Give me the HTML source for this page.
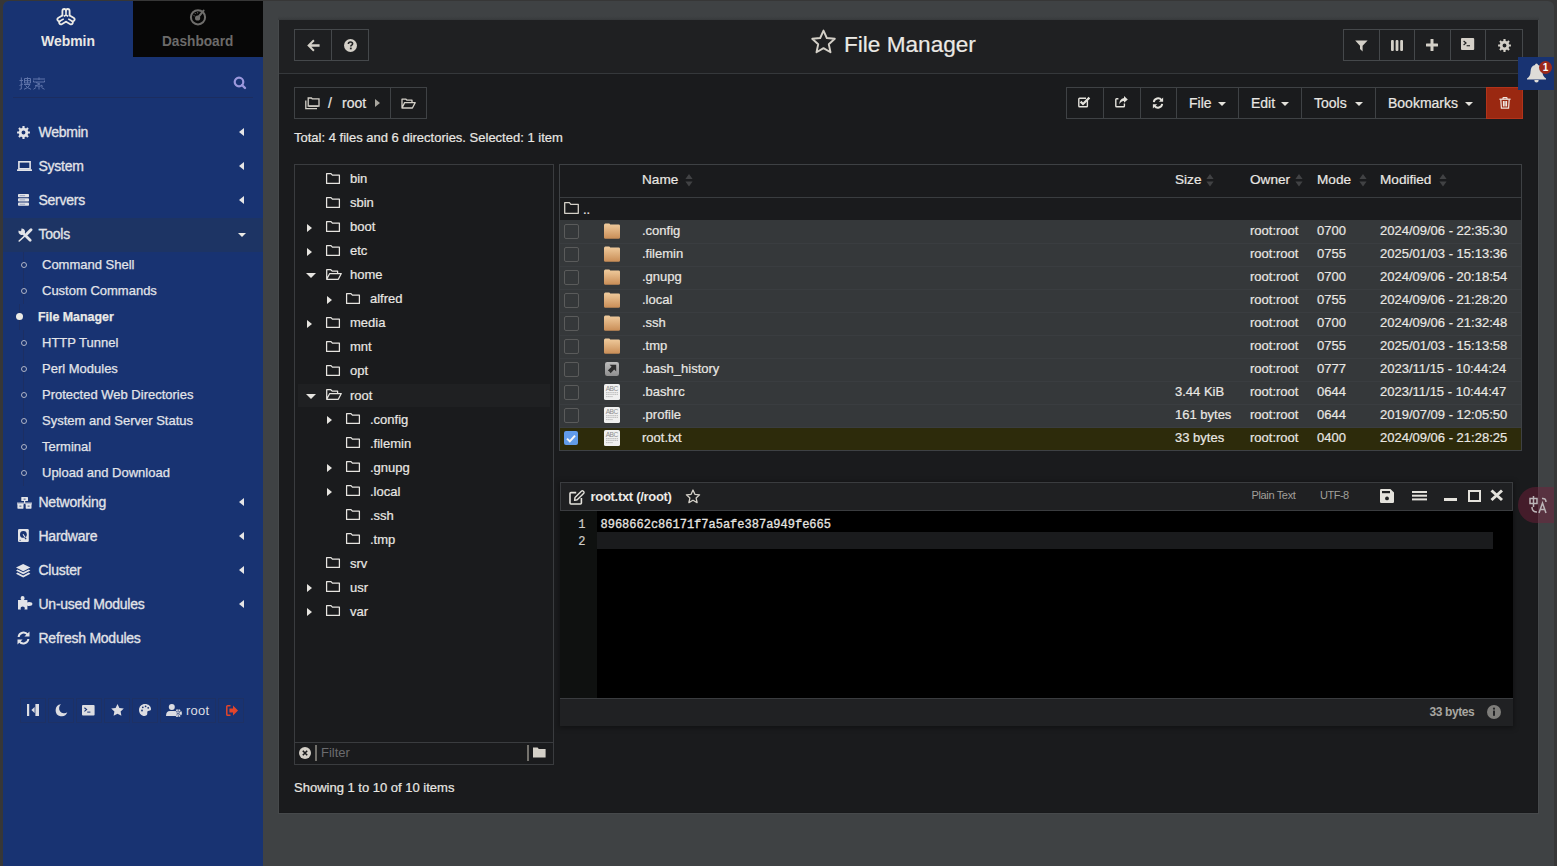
<!DOCTYPE html>
<html><head><meta charset="utf-8">
<style>
*{box-sizing:border-box;margin:0;padding:0}
html,body{width:1557px;height:866px;overflow:hidden;background:#373737;font-family:"Liberation Sans",sans-serif;position:relative}
.a{position:absolute}
.t{position:absolute;white-space:nowrap;height:20px;line-height:20px}
svg{position:absolute;display:block;overflow:visible}
#win{left:3px;top:1px;width:1551px;height:865px;border-radius:6px 6px 0 0;background:#3f4244}
#side{left:3px;top:1px;width:260px;height:865px;background:#183372;border-radius:6px 0 0 0}
.mi{color:#e3e4e8;font-size:14px;letter-spacing:-0.25px;-webkit-text-stroke:0.3px #e3e4e8}
.sm{color:#e2e4e9;font-size:13px;-webkit-text-stroke:0.25px #e2e4e9;transform:translateY(1px)}
.car{position:absolute;width:0;height:0;border-top:4px solid transparent;border-bottom:4px solid transparent;border-right:5px solid #e6e6e6;margin-left:1px}
.bb{position:absolute;top:698px;height:25px;border:1px solid #1d3165}
/* main */
#main{left:279px;top:20px;width:1259px;height:793px;background:#1a1b1d;box-shadow:inset -1px -1px 0 #18191b}
.grp{position:absolute;border:1px solid #45484b;background:#1e1f21}
.dv{position:absolute;width:1px;background:#45484b}
.pt{color:#e9e7e3;-webkit-text-stroke:0.2px #e9e7e3}
.ic{fill:#d4d0c8}
</style></head><body>
<div id="win" class="a"></div>
<div id="side" class="a"></div>
<!-- dashboard tab -->
<div class="a" style="left:133px;top:1px;width:130px;height:56px;background:#070707"></div>
<!-- webmin logo -->
<svg style="left:56px;top:7px" width="20" height="19" viewBox="-10 -10 20 19">
 <g transform="translate(0,0.6)">
 <path d="M-3.6 -2.2 V-6.6 Q-3.6 -8.6 -1.8 -8.6 Q0 -8.6 0 -6.8 Q0 -8.6 1.8 -8.6 Q3.6 -8.6 3.6 -6.6 V-2.2" fill="none" stroke="#ecebe6" stroke-width="1.8" stroke-linejoin="round" stroke-linecap="round"/>
 <path d="M-3.6 -2.2 V-6.6 Q-3.6 -8.6 -1.8 -8.6 Q0 -8.6 0 -6.8 Q0 -8.6 1.8 -8.6 Q3.6 -8.6 3.6 -6.6 V-2.2" fill="none" stroke="#ecebe6" stroke-width="1.8" stroke-linejoin="round" stroke-linecap="round" transform="rotate(120)"/>
 <path d="M-3.6 -2.2 V-6.6 Q-3.6 -8.6 -1.8 -8.6 Q0 -8.6 0 -6.8 Q0 -8.6 1.8 -8.6 Q3.6 -8.6 3.6 -6.6 V-2.2" fill="none" stroke="#ecebe6" stroke-width="1.8" stroke-linejoin="round" stroke-linecap="round" transform="rotate(240)"/>
 <path d="M0 -6.8 V-2.6 M0 -2.6 L-2.2 -1.2 M0 -2.6 L2.2 -1.2" stroke="#ecebe6" stroke-width="1.6" fill="none"/>
 <path d="M0 -6.8 V-2.6" stroke="#ecebe6" stroke-width="1.6" transform="rotate(120)"/>
 <path d="M0 -6.8 V-2.6" stroke="#ecebe6" stroke-width="1.6" transform="rotate(240)"/>
 </g>
</svg>
<div class="t" style="left:41px;top:30.8px;font-size:15px;font-weight:bold;color:#e9e8e4;transform:scaleX(0.93);transform-origin:0 0">Webmin</div>
<!-- dashboard icon -->
<svg style="left:189px;top:8px" width="18" height="18" viewBox="0 0 18 18">
 <circle cx="9" cy="9.3" r="7.1" fill="none" stroke="#6f6e6c" stroke-width="2"/>
 <path d="M9 9.5 L14.6 2.6" stroke="#6f6e6c" stroke-width="2" stroke-linecap="round"/>
 <circle cx="8.6" cy="10" r="2.6" fill="#6f6e6c"/>
 <path d="M4.6 7.5 L5.6 7.9 M6 5.2 L6.7 6 M8.6 4.3 L8.6 5.3" stroke="#6f6e6c" stroke-width="1"/>
</svg>
<div class="t" style="left:162px;top:30.8px;font-size:15px;font-weight:bold;color:#6c6b6a;transform:scaleX(0.91);transform-origin:0 0">Dashboard</div>
<!-- search -->
<svg style="left:19px;top:77px" width="27" height="13" viewBox="0 0 27 13">
 <g stroke="#5f74aa" stroke-width="1" fill="none">
  <path d="M0.5 3.5 H4 M2.3 0.5 V12 L0.6 12.3 M0.5 8.5 L4 7"/>
  <path d="M5.5 1.5 H11.5 V6 H5.5 Z M5.5 3.7 H11.5 M8.5 0.3 V6.5 M5 7.5 H11 Q9.5 11 5 12.3 M6.5 8.5 Q8 11 12 12.3"/>
  <path d="M14 2 H26 M20 0.3 V3 M14.5 3.5 V5 H25.5 V3.5 M17 5.5 L21 7 L16 9 H23 M22 8 L24 9.5 M20 9 V12.5 M17 10.5 L14.5 12.3 M22.5 10.5 L25.5 12.3"/>
 </g>
</svg>
<svg style="left:232px;top:75px" width="15" height="15" viewBox="0 0 15 15">
 <circle cx="7" cy="7" r="4.3" fill="none" stroke="#9b98dc" stroke-width="2.2"/>
 <path d="M10 10 L13 13" stroke="#9b98dc" stroke-width="2.4" stroke-linecap="round"/>
</svg>
<div class="a" style="left:13px;top:97px;width:240px;height:1px;background:#1b2d60"></div>

<!-- menu -->
<svg style="left:17.3px;top:125.5px" width="13" height="13" viewBox="0 0 14 14"><path fill="#e3e4e8" fill-rule="evenodd" d="M12.07 5.83 L13.91 5.85 L13.91 8.15 L12.07 8.17 L11.41 9.75 L12.70 11.07 L11.07 12.70 L9.75 11.41 L8.17 12.07 L8.15 13.91 L5.85 13.91 L5.83 12.07 L4.25 11.41 L2.93 12.70 L1.30 11.07 L2.59 9.75 L1.93 8.17 L0.09 8.15 L0.09 5.85 L1.93 5.83 L2.59 4.25 L1.30 2.93 L2.93 1.30 L4.25 2.59 L5.83 1.93 L5.85 0.09 L8.15 0.09 L8.17 1.93 L9.75 2.59 L11.07 1.30 L12.70 2.93 L11.41 4.25 Z M9.10 7.00 A2.1 2.1 0 1 0 4.90 7.00 A2.1 2.1 0 1 0 9.10 7.00 Z"/></svg>
<div class="t mi" style="left:38.5px;top:122px">Webmin</div>
<div class="car" style="left:238px;top:128px"></div>

<svg style="left:17px;top:161px" width="15" height="10" viewBox="0 0 15 10">
 <rect x="1.9" y="0.8" width="11.2" height="7" fill="none" stroke="#e3e4e8" stroke-width="1.6"/>
 <rect x="0" y="8.2" width="15" height="1.8" rx="0.5" fill="#e3e4e8"/>
</svg>
<div class="t mi" style="left:38.5px;top:156px">System</div>
<div class="car" style="left:238px;top:162px"></div>

<svg style="left:18.3px;top:194px" width="11" height="12" viewBox="0 0 11 12">
 <g fill="#e3e4e8"><rect x="0" y="0" width="11" height="3.3" rx="0.8"/><rect x="0" y="4.2" width="11" height="3.3" rx="0.8"/><rect x="0" y="8.5" width="11" height="3.3" rx="0.8"/></g>
 <g fill="#8a97b8"><rect x="1.6" y="1.3" width="5.5" height="0.8"/><rect x="1.6" y="5.5" width="5.5" height="0.8"/><rect x="1.6" y="9.8" width="5.5" height="0.8"/></g>
</svg>
<div class="t mi" style="left:38.5px;top:190px">Servers</div>
<div class="car" style="left:238px;top:196px"></div>

<div class="a" style="left:3px;top:218px;width:260px;height:34px;background:#1d3464"></div>
<svg style="left:17.5px;top:227.5px" width="14" height="14" viewBox="0 0 14 14">
 <path d="M5 5 L12.2 12.2" stroke="#e3e4e8" stroke-width="2.8" stroke-linecap="round"/>
 <path d="M0.6 2.6 A3.3 3.3 0 1 0 3.4 0.4 L3.4 2.2 L2.4 3.2 Z" fill="#e3e4e8"/>
 <path d="M13 1.8 L9 5.8" stroke="#e3e4e8" stroke-width="3" stroke-linecap="round"/>
 <path d="M9 5.8 L1.2 13" stroke="#e3e4e8" stroke-width="1.6" stroke-linecap="round"/>
</svg>
<div class="t mi" style="left:38.5px;top:224px">Tools</div>
<div class="a" style="left:238px;top:233px;width:0;height:0;border-left:4px solid transparent;border-right:4px solid transparent;border-top:4px solid #ecebe6"></div>

<!-- submenu line -->
<div class="a" style="left:23px;top:252px;width:1px;height:52px;background:#1c2f63"></div>
<div class="a" style="left:19px;top:304px;width:1px;height:26px;background:#1c2f63"></div>
<div class="a" style="left:23px;top:330px;width:1px;height:156px;background:#1c2f63"></div>
<div class="a" style="left:20.5px;top:262px;width:6px;height:6px;border:1px solid #aeb4c6;border-radius:50%"></div>
<div class="t sm" style="left:42px;top:254px">Command Shell</div>
<div class="a" style="left:20.5px;top:288px;width:6px;height:6px;border:1px solid #aeb4c6;border-radius:50%"></div>
<div class="t sm" style="left:42px;top:280px">Custom Commands</div>
<div class="a" style="left:16px;top:313px;width:7px;height:7px;background:#ecebe6;border-radius:50%"></div>
<div class="t sm" style="left:38px;top:306px;font-weight:bold;font-size:12.4px;color:#ecebe6">File Manager</div>
<div class="a" style="left:20.5px;top:340px;width:6px;height:6px;border:1px solid #aeb4c6;border-radius:50%"></div>
<div class="t sm" style="left:42px;top:332px">HTTP Tunnel</div>
<div class="a" style="left:20.5px;top:366px;width:6px;height:6px;border:1px solid #aeb4c6;border-radius:50%"></div>
<div class="t sm" style="left:42px;top:358px">Perl Modules</div>
<div class="a" style="left:20.5px;top:392px;width:6px;height:6px;border:1px solid #aeb4c6;border-radius:50%"></div>
<div class="t sm" style="left:42px;top:384px">Protected Web Directories</div>
<div class="a" style="left:20.5px;top:418px;width:6px;height:6px;border:1px solid #aeb4c6;border-radius:50%"></div>
<div class="t sm" style="left:42px;top:410px">System and Server Status</div>
<div class="a" style="left:20.5px;top:444px;width:6px;height:6px;border:1px solid #aeb4c6;border-radius:50%"></div>
<div class="t sm" style="left:42px;top:436px">Terminal</div>
<div class="a" style="left:20.5px;top:470px;width:6px;height:6px;border:1px solid #aeb4c6;border-radius:50%"></div>
<div class="t sm" style="left:42px;top:462px">Upload and Download</div>

<!-- lower menu -->
<svg style="left:16.6px;top:497px" width="15" height="12" viewBox="0 0 15 12">
 <g fill="#e3e4e8"><rect x="4.3" y="0" width="6.7" height="4.1" rx="0.6"/><rect x="0.4" y="6.7" width="6.1" height="5" rx="0.6"/><rect x="8.7" y="6.7" width="5.8" height="5" rx="0.6"/><rect x="0" y="5.6" width="15" height="1.1"/><rect x="7" y="4" width="1.2" height="2"/></g>
 <g fill="#183372"><rect x="6.6" y="1.7" width="2" height="0.8"/><rect x="2.4" y="8.7" width="2" height="0.8"/><rect x="10.6" y="8.7" width="2" height="0.8"/></g>
</svg>
<div class="t mi" style="left:38.5px;top:492px">Networking</div>
<div class="car" style="left:238px;top:498px"></div>

<svg style="left:18.3px;top:529px" width="11" height="13" viewBox="0 0 11 13">
 <rect x="0" y="0" width="10.8" height="13" rx="1.3" fill="#e3e4e8"/>
 <circle cx="5.4" cy="5.4" r="3.4" fill="#183372"/>
 <path d="M5 5.2 L7.6 9" stroke="#e3e4e8" stroke-width="1.1"/>
 <path d="M6.8 8.6 L8.2 10.2" stroke="#183372" stroke-width="1.2"/>
 <rect x="1.6" y="10.8" width="1" height="1" fill="#183372"/>
</svg>
<div class="t mi" style="left:38.5px;top:526px">Hardware</div>
<div class="car" style="left:238px;top:532px"></div>

<svg style="left:16.4px;top:563.8px" width="15" height="14" viewBox="0 0 15 14">
 <g fill="#e3e4e8"><path d="M7.2 0 L14.4 3.6 L7.2 7.2 L0 3.6 Z"/><path d="M1.6 5.4 L7.2 8.2 L12.8 5.4 L14.4 6.6 L7.2 10.2 L0 6.6 Z"/><path d="M1.6 8.6 L7.2 11.4 L12.8 8.6 L14.4 9.8 L7.2 13.4 L0 9.8 Z"/></g>
</svg>
<div class="t mi" style="left:38.5px;top:560px">Cluster</div>
<div class="car" style="left:238px;top:566px"></div>

<svg style="left:18px;top:596px" width="15" height="14" viewBox="0 0 15 14">
 <path fill="#e3e4e8" d="M0 4 H3.4 Q2.6 3.2 2.6 2.2 Q2.6 0 4.6 0 Q6.6 0 6.6 2.2 Q6.6 3.2 5.8 4 H9.4 V6.6 Q10 6.1 11 6.1 Q14.4 6.2 14.4 8 Q14.4 9.9 11 9.9 Q10 9.9 9.4 9.4 V13.4 H6.4 Q6.8 12.8 6.8 12 Q6.8 10.5 4.7 10.5 Q2.6 10.5 2.6 12 Q2.6 12.8 3 13.4 H0 Z"/>
</svg>
<div class="t mi" style="left:38.5px;top:594px">Un-used Modules</div>
<div class="car" style="left:238px;top:600px"></div>

<svg style="left:17px;top:631px" width="13" height="14" viewBox="0 0 13 14">
 <g fill="none" stroke="#e3e4e8" stroke-width="2"><path d="M1.6 6 A5 5 0 0 1 10.6 3.6"/><path d="M11.4 8 A5 5 0 0 1 2.4 10.4"/></g>
 <path d="M12.5 0.5 V5.6 H7.4 Z" fill="#e3e4e8"/><path d="M0.5 13.5 V8.4 H5.6 Z" fill="#e3e4e8"/>
</svg>
<div class="t mi" style="left:38.5px;top:628px">Refresh Modules</div>

<!-- bottom buttons -->
<div class="bb" style="left:20px;width:26px"></div>
<div class="bb" style="left:48px;width:26px"></div>
<div class="bb" style="left:76px;width:26px"></div>
<div class="bb" style="left:104px;width:26px"></div>
<div class="bb" style="left:132px;width:26px"></div>
<div class="bb" style="left:160px;width:56px"></div>
<div class="bb" style="left:218px;width:26px"></div>
<svg style="left:27px;top:704px" width="12" height="12" viewBox="0 0 12 12">
 <g fill="#dcdde2"><rect x="0" y="0" width="2.2" height="12"/><rect x="8.4" y="0" width="3.6" height="12"/><path d="M7.6 3 V9 L4.4 6 Z"/></g>
</svg>
<svg style="left:55px;top:704px" width="13" height="12" viewBox="0 0 13 12">
 <path fill="#dcdde2" d="M6 0.3 A6 6 0 1 0 12.3 8.2 A5 5 0 0 1 6 0.3 Z"/>
</svg>
<svg style="left:82px;top:705px" width="13" height="11" viewBox="0 0 13 11">
 <rect x="0" y="0" width="12.6" height="10.4" rx="1" fill="#dcdde2"/>
 <path d="M2.4 2.8 L4.6 4.6 L2.4 6.4" stroke="#183372" stroke-width="1.1" fill="none"/><rect x="5.2" y="6.6" width="3.2" height="1" fill="#183372"/>
</svg>
<svg style="left:111px;top:704px" width="13" height="12" viewBox="0 0 13 12">
 <path fill="#dcdde2" d="M6.5 0 L8.4 3.9 L12.8 4.4 L9.6 7.4 L10.4 11.8 L6.5 9.7 L2.6 11.8 L3.4 7.4 L0.2 4.4 L4.6 3.9 Z"/>
</svg>
<svg style="left:139px;top:704px" width="12" height="12" viewBox="0 0 12 12">
 <path fill="#dcdde2" d="M6 0 C9.5 0 12 2.3 12 5 C12 7 10 6.6 9 7 C7.8 7.6 8.6 9 8.2 10.3 C7.9 11.6 6.6 12 5.6 12 C2.5 12 0 9.4 0 6 C0 2.6 2.6 0 6 0 Z"/>
 <g fill="#183372"><circle cx="3" cy="6.5" r="0.9"/><circle cx="3.8" cy="3.3" r="0.9"/><circle cx="6.6" cy="2.3" r="0.9"/><circle cx="9.2" cy="3.8" r="0.9"/></g>
</svg>
<svg style="left:166px;top:704px" width="16" height="13" viewBox="0 0 16 13">
 <circle cx="5.8" cy="3" r="3" fill="#dcdde2"/>
 <path fill="#dcdde2" d="M0 12 Q0 7 4 7 H8 Q9.5 7 10.5 8 V12 Z"/>
 <circle cx="12" cy="9.2" r="2.9" fill="none" stroke="#dcdde2" stroke-width="2" stroke-dasharray="1.6 0.7"/>
 <circle cx="12" cy="9.2" r="1.6" fill="#dcdde2"/><circle cx="12" cy="9.2" r="0.8" fill="#183372"/>
</svg>
<div class="t" style="left:186px;top:701px;font-size:13px;letter-spacing:0.2px;color:#dcdde2">root</div>
<svg style="left:226px;top:705px" width="12" height="11" viewBox="0 0 12 11">
 <path d="M4.5 0.8 H1.6 Q0.8 0.8 0.8 1.6 V9.4 Q0.8 10.2 1.6 10.2 H4.5" fill="none" stroke="#e2452b" stroke-width="1.5"/>
 <path fill="#e2452b" d="M3.4 3.6 H7 V0.6 L12 5.5 L7 10.4 V7.4 H3.4 Z"/>
</svg>


<!-- MAIN -->
<div class="a" style="left:278px;top:16px;width:1261px;height:4px;background:linear-gradient(#3f4244,#3b3e40 60%,#37393b)"></div>
<div class="a" style="left:278px;top:20px;width:1261px;height:794px;background:#46494b"></div>
<div id="main" class="a"></div>
<div class="a" style="left:279px;top:20px;width:1259px;height:53px;background:#1f2022"></div>
<div class="a" style="left:279px;top:73px;width:1259px;height:1px;background:#35383b"></div>
<!-- back/help -->
<div class="grp" style="left:294px;top:29px;width:75px;height:32px"></div>
<div class="dv" style="left:331px;top:29px;height:32px"></div>
<svg style="left:307px;top:39px" width="13" height="13" viewBox="0 0 13 13">
 <path class="ic" d="M6.2 0.6 L7.6 2 L4.4 5.2 H12.6 V7.8 H4.4 L7.6 11 L6.2 12.4 L0.2 6.5 Z"/>
</svg>
<svg style="left:343.5px;top:38.5px" width="13" height="13" viewBox="0 0 13 13">
 <circle cx="6.5" cy="6.5" r="6.5" class="ic"/>
 <path d="M4.4 5 Q4.4 3 6.5 3 Q8.6 3 8.6 4.8 Q8.6 5.8 7.4 6.4 Q6.8 6.8 6.8 7.6" fill="none" stroke="#1f2022" stroke-width="1.6"/>
 <rect x="5.9" y="8.6" width="1.8" height="1.7" fill="#1f2022"/>
</svg>
<!-- title -->
<svg style="left:810px;top:29px" width="27" height="26" viewBox="0 0 27 26">
 <path d="M13.5 1.6 L16.8 9 L24.8 9.8 L18.8 15.2 L20.5 23.2 L13.5 19.1 L6.5 23.2 L8.2 15.2 L2.2 9.8 L10.2 9 Z" fill="none" stroke="#d4d0c8" stroke-width="1.9" stroke-linejoin="round"/>
</svg>
<div class="t pt" style="left:844px;top:31px;height:28px;line-height:28px;font-size:22.6px;color:#eceae6">File Manager</div>
<!-- right tools -->
<div class="grp" style="left:1343px;top:29px;width:180px;height:32px"></div>
<div class="dv" style="left:1379px;top:29px;height:32px"></div>
<div class="dv" style="left:1414px;top:29px;height:32px"></div>
<div class="dv" style="left:1450px;top:29px;height:32px"></div>
<div class="dv" style="left:1485px;top:29px;height:32px"></div>
<svg style="left:1355px;top:39.5px" width="13" height="12" viewBox="0 0 13 12">
 <path class="ic" d="M0.2 0.6 H12.6 L7.6 5.8 V11.6 L5 9 V5.8 Z"/>
</svg>
<svg style="left:1391px;top:39.5px" width="12" height="11" viewBox="0 0 12 11">
 <g class="ic"><rect x="0" y="0" width="2.8" height="11" rx="1"/><rect x="4.6" y="0" width="2.8" height="11" rx="1"/><rect x="9.2" y="0" width="2.8" height="11" rx="1"/></g>
</svg>
<svg style="left:1426px;top:38.5px" width="12" height="12" viewBox="0 0 12 12">
 <g class="ic"><rect x="4.5" y="0" width="3" height="12" rx="0.5"/><rect x="0" y="4.5" width="12" height="3" rx="0.5"/></g>
</svg>
<svg style="left:1461px;top:38px" width="14" height="12" viewBox="0 0 14 12">
 <rect x="0" y="0" width="13.2" height="12" rx="1" class="ic"/>
 <path d="M2.6 3 L5 5 L2.6 7" stroke="#1f2022" stroke-width="1.2" fill="none"/><rect x="5.6" y="7.2" width="3.4" height="1.1" fill="#1f2022"/>
</svg>
<svg style="left:1497.5px;top:38.5px" width="13" height="13" viewBox="0 0 14 14"><path class="ic" fill-rule="evenodd" d="M12.07 5.83 L13.91 5.85 L13.91 8.15 L12.07 8.17 L11.41 9.75 L12.70 11.07 L11.07 12.70 L9.75 11.41 L8.17 12.07 L8.15 13.91 L5.85 13.91 L5.83 12.07 L4.25 11.41 L2.93 12.70 L1.30 11.07 L2.59 9.75 L1.93 8.17 L0.09 8.15 L0.09 5.85 L1.93 5.83 L2.59 4.25 L1.30 2.93 L2.93 1.30 L4.25 2.59 L5.83 1.93 L5.85 0.09 L8.15 0.09 L8.17 1.93 L9.75 2.59 L11.07 1.30 L12.70 2.93 L11.41 4.25 Z M9.10 7.00 A2.1 2.1 0 1 0 4.90 7.00 A2.1 2.1 0 1 0 9.10 7.00 Z"/></svg>

<!-- breadcrumb -->
<div class="grp" style="left:294px;top:87px;width:97px;height:32px;background:#1a1b1d;border-color:#3f4245"></div>
<div class="grp" style="left:390px;top:87px;width:37px;height:32px;background:#1a1b1d;border-color:#3f4245"></div>
<svg style="left:304.5px;top:97px" width="15" height="13" viewBox="0 0 15 13">
 <g fill="none" stroke="#d4d0c8" stroke-width="1.3">
  <path d="M3.2 2.6 V1 H6.4 L7.2 1.8 H14 V9.2 H3.2 Z"/>
  <path d="M0.8 3.4 V11.6 H12"/>
 </g>
 <rect x="3.8" y="8.4" width="9.6" height="1.4" fill="#d4d0c8"/>
</svg>
<div class="t pt" style="left:328px;top:93px;font-size:14px">/</div>
<div class="t pt" style="left:342px;top:93px;font-size:14px">root</div>
<div class="a" style="left:375px;top:99px;width:0;height:0;border-top:4px solid transparent;border-bottom:4px solid transparent;border-left:5px solid #a9a69f"></div>
<svg style="left:401px;top:98px" width="15" height="11" viewBox="0 0 15 11">
 <path d="M1 10 V1.2 H5 L6 2.2 H11 V4.4 M1 10 L3.6 4.6 H14.2 L11.4 10 Z" fill="none" stroke="#d4d0c8" stroke-width="1.3" stroke-linejoin="round"/>
</svg>
<div class="t pt" style="left:294px;top:128px;font-size:13px">Total: 4 files and 6 directories. Selected: 1 item</div>

<!-- action row -->
<div class="grp" style="left:1066px;top:87px;width:421px;height:32px;background:#1a1b1d;border-color:#3f4245"></div>
<div class="dv" style="left:1103px;top:87px;height:32px;background:#3f4245"></div>
<div class="dv" style="left:1140px;top:87px;height:32px;background:#3f4245"></div>
<div class="dv" style="left:1176px;top:87px;height:32px;background:#3f4245"></div>
<div class="dv" style="left:1238px;top:87px;height:32px;background:#3f4245"></div>
<div class="dv" style="left:1301px;top:87px;height:32px;background:#3f4245"></div>
<div class="dv" style="left:1375px;top:87px;height:32px;background:#3f4245"></div>
<div class="a" style="left:1486px;top:87px;width:37px;height:32px;background:#9a2811;border:1px solid #b3331a"></div>
<svg style="left:1078px;top:96px" width="13" height="12" viewBox="0 0 13 12">
 <path d="M9.4 4.6 V10 Q9.4 10.8 8.6 10.8 H1.6 Q0.8 10.8 0.8 10 V3 Q0.8 2.2 1.6 2.2 H8" fill="none" stroke="#e4e2dc" stroke-width="1.4"/>
 <path d="M2.6 5.6 L5 8 L11.4 1.6" fill="none" stroke="#e4e2dc" stroke-width="2.2"/>
</svg>
<svg style="left:1115px;top:95.5px" width="13" height="12" viewBox="0 0 13 12">
 <path d="M9.4 7.6 V10 Q9.4 10.8 8.6 10.8 H1.6 Q0.8 10.8 0.8 10 V3.6 Q0.8 2.8 1.6 2.8 H3.4" fill="none" stroke="#e4e2dc" stroke-width="1.4"/>
 <path fill="#e4e2dc" d="M9 0 L12.8 3.4 L9 6.8 V5 Q5.6 5 4.4 8.6 Q4 3 9 2 Z"/>
</svg>
<svg style="left:1152px;top:96.5px" width="12" height="12" viewBox="0 0 13 14">
 <g fill="none" stroke="#e4e2dc" stroke-width="2.2"><path d="M1.6 6 A5 5 0 0 1 10.6 3.6"/><path d="M11.4 8 A5 5 0 0 1 2.4 10.4"/></g>
 <path d="M12.5 0.5 V5.6 H7.4 Z" fill="#e4e2dc"/><path d="M0.5 13.5 V8.4 H5.6 Z" fill="#e4e2dc"/>
</svg>
<div class="t pt" style="left:1189px;top:93px;font-size:14px">File</div>
<div class="a" style="left:1218px;top:102px;width:0;height:0;border-left:4px solid transparent;border-right:4px solid transparent;border-top:4px solid #e4e2dc"></div>
<div class="t pt" style="left:1251px;top:93px;font-size:14px">Edit</div>
<div class="a" style="left:1281px;top:102px;width:0;height:0;border-left:4px solid transparent;border-right:4px solid transparent;border-top:4px solid #e4e2dc"></div>
<div class="t pt" style="left:1314px;top:93px;font-size:14px">Tools</div>
<div class="a" style="left:1355px;top:102px;width:0;height:0;border-left:4px solid transparent;border-right:4px solid transparent;border-top:4px solid #e4e2dc"></div>
<div class="t pt" style="left:1388px;top:93px;font-size:14px">Bookmarks</div>
<div class="a" style="left:1465px;top:102px;width:0;height:0;border-left:4px solid transparent;border-right:4px solid transparent;border-top:4px solid #e4e2dc"></div>
<svg style="left:1498.5px;top:97px" width="12" height="12" viewBox="0 0 12 12">
 <g fill="none" stroke="#f0e6e0" stroke-width="1.2"><path d="M0.4 2.2 H11.6"/><path d="M4 2.2 V1.2 Q4 0.6 4.6 0.6 H7.4 Q8 0.6 8 1.2 V2.2"/><path d="M1.8 2.4 L2.4 11.2 H9.6 L10.2 2.4"/><path d="M4.5 4 V9.6 M6 4 V9.6 M7.5 4 V9.6"/></g>
</svg>
<!-- bell -->
<div class="a" style="left:1518px;top:57px;width:36px;height:33px;background:#183372"></div>
<svg style="left:1527px;top:63px" width="20" height="20" viewBox="0 0 20 20">
 <path fill="#dedcd8" d="M9.5 0.5 Q11 0.5 11 2 Q15.5 3 15.5 9 Q15.5 13 19 15.6 V16.4 H0 V15.6 Q3.5 13 3.5 9 Q3.5 3 8 2 Q8 0.5 9.5 0.5 Z M7.3 17 H11.7 Q11.7 19.5 9.5 19.5 Q7.3 19.5 7.3 17 Z"/>
</svg>
<div class="a" style="left:1539px;top:61px;width:13px;height:13px;border-radius:50%;background:#9c2a1c;color:#fff;font-size:10px;font-weight:bold;line-height:13px;text-align:center">1</div>

<!-- TREE -->
<div class="a" style="left:294px;top:164px;width:260px;height:601px;border:1px solid #3a3c3f;background:#1a1b1d"></div>
<div class="a" style="left:298px;top:384px;width:252px;height:23px;background:#1f2022"></div>
<svg style="left:326px;top:172.5px" width="14" height="11" viewBox="0 0 14 11"><path d="M0.6 10.4 V0.6 H5 L6.4 2.2 H13.4 V10.4 Z" fill="none" stroke="#e6e4e0" stroke-width="1.25" stroke-linejoin="round"/></svg>
<div class="t pt" style="left:350px;top:169.0px;font-size:13px">bin</div>
<svg style="left:326px;top:196.6px" width="14" height="11" viewBox="0 0 14 11"><path d="M0.6 10.4 V0.6 H5 L6.4 2.2 H13.4 V10.4 Z" fill="none" stroke="#e6e4e0" stroke-width="1.25" stroke-linejoin="round"/></svg>
<div class="t pt" style="left:350px;top:193.1px;font-size:13px">sbin</div>
<div class="a" style="left:307px;top:223.6px;width:0;height:0;border-top:4px solid transparent;border-bottom:4px solid transparent;border-left:5px solid #e6e4e0"></div>
<svg style="left:326px;top:220.6px" width="14" height="11" viewBox="0 0 14 11"><path d="M0.6 10.4 V0.6 H5 L6.4 2.2 H13.4 V10.4 Z" fill="none" stroke="#e6e4e0" stroke-width="1.25" stroke-linejoin="round"/></svg>
<div class="t pt" style="left:350px;top:217.1px;font-size:13px">boot</div>
<div class="a" style="left:307px;top:247.7px;width:0;height:0;border-top:4px solid transparent;border-bottom:4px solid transparent;border-left:5px solid #e6e4e0"></div>
<svg style="left:326px;top:244.7px" width="14" height="11" viewBox="0 0 14 11"><path d="M0.6 10.4 V0.6 H5 L6.4 2.2 H13.4 V10.4 Z" fill="none" stroke="#e6e4e0" stroke-width="1.25" stroke-linejoin="round"/></svg>
<div class="t pt" style="left:350px;top:241.2px;font-size:13px">etc</div>
<div class="a" style="left:306px;top:273.2px;width:0;height:0;border-left:5px solid transparent;border-right:5px solid transparent;border-top:5px solid #e6e4e0"></div>
<svg style="left:326px;top:268.7px" width="16" height="11" viewBox="0 0 16 11"><path d="M0.7 10.3 V0.7 H4.8 L6.2 2.1 H11.6 V4.4 M0.7 10.3 L3.7 4.5 H15.3 L12.3 10.3 Z" fill="none" stroke="#e6e4e0" stroke-width="1.25" stroke-linejoin="round"/></svg>
<div class="t pt" style="left:350px;top:265.2px;font-size:13px">home</div>
<div class="a" style="left:327px;top:295.8px;width:0;height:0;border-top:4px solid transparent;border-bottom:4px solid transparent;border-left:5px solid #e6e4e0"></div>
<svg style="left:346px;top:292.8px" width="14" height="11" viewBox="0 0 14 11"><path d="M0.6 10.4 V0.6 H5 L6.4 2.2 H13.4 V10.4 Z" fill="none" stroke="#e6e4e0" stroke-width="1.25" stroke-linejoin="round"/></svg>
<div class="t pt" style="left:370px;top:289.3px;font-size:13px">alfred</div>
<div class="a" style="left:307px;top:319.8px;width:0;height:0;border-top:4px solid transparent;border-bottom:4px solid transparent;border-left:5px solid #e6e4e0"></div>
<svg style="left:326px;top:316.8px" width="14" height="11" viewBox="0 0 14 11"><path d="M0.6 10.4 V0.6 H5 L6.4 2.2 H13.4 V10.4 Z" fill="none" stroke="#e6e4e0" stroke-width="1.25" stroke-linejoin="round"/></svg>
<div class="t pt" style="left:350px;top:313.3px;font-size:13px">media</div>
<svg style="left:326px;top:340.9px" width="14" height="11" viewBox="0 0 14 11"><path d="M0.6 10.4 V0.6 H5 L6.4 2.2 H13.4 V10.4 Z" fill="none" stroke="#e6e4e0" stroke-width="1.25" stroke-linejoin="round"/></svg>
<div class="t pt" style="left:350px;top:337.4px;font-size:13px">mnt</div>
<svg style="left:326px;top:364.9px" width="14" height="11" viewBox="0 0 14 11"><path d="M0.6 10.4 V0.6 H5 L6.4 2.2 H13.4 V10.4 Z" fill="none" stroke="#e6e4e0" stroke-width="1.25" stroke-linejoin="round"/></svg>
<div class="t pt" style="left:350px;top:361.4px;font-size:13px">opt</div>
<div class="a" style="left:306px;top:393.5px;width:0;height:0;border-left:5px solid transparent;border-right:5px solid transparent;border-top:5px solid #e6e4e0"></div>
<svg style="left:326px;top:389.0px" width="16" height="11" viewBox="0 0 16 11"><path d="M0.7 10.3 V0.7 H4.8 L6.2 2.1 H11.6 V4.4 M0.7 10.3 L3.7 4.5 H15.3 L12.3 10.3 Z" fill="none" stroke="#e6e4e0" stroke-width="1.25" stroke-linejoin="round"/></svg>
<div class="t pt" style="left:350px;top:385.5px;font-size:13px">root</div>
<div class="a" style="left:327px;top:416.0px;width:0;height:0;border-top:4px solid transparent;border-bottom:4px solid transparent;border-left:5px solid #e6e4e0"></div>
<svg style="left:346px;top:413.0px" width="14" height="11" viewBox="0 0 14 11"><path d="M0.6 10.4 V0.6 H5 L6.4 2.2 H13.4 V10.4 Z" fill="none" stroke="#e6e4e0" stroke-width="1.25" stroke-linejoin="round"/></svg>
<div class="t pt" style="left:370px;top:409.5px;font-size:13px">.config</div>
<svg style="left:346px;top:437.1px" width="14" height="11" viewBox="0 0 14 11"><path d="M0.6 10.4 V0.6 H5 L6.4 2.2 H13.4 V10.4 Z" fill="none" stroke="#e6e4e0" stroke-width="1.25" stroke-linejoin="round"/></svg>
<div class="t pt" style="left:370px;top:433.6px;font-size:13px">.filemin</div>
<div class="a" style="left:327px;top:464.1px;width:0;height:0;border-top:4px solid transparent;border-bottom:4px solid transparent;border-left:5px solid #e6e4e0"></div>
<svg style="left:346px;top:461.1px" width="14" height="11" viewBox="0 0 14 11"><path d="M0.6 10.4 V0.6 H5 L6.4 2.2 H13.4 V10.4 Z" fill="none" stroke="#e6e4e0" stroke-width="1.25" stroke-linejoin="round"/></svg>
<div class="t pt" style="left:370px;top:457.6px;font-size:13px">.gnupg</div>
<div class="a" style="left:327px;top:488.2px;width:0;height:0;border-top:4px solid transparent;border-bottom:4px solid transparent;border-left:5px solid #e6e4e0"></div>
<svg style="left:346px;top:485.2px" width="14" height="11" viewBox="0 0 14 11"><path d="M0.6 10.4 V0.6 H5 L6.4 2.2 H13.4 V10.4 Z" fill="none" stroke="#e6e4e0" stroke-width="1.25" stroke-linejoin="round"/></svg>
<div class="t pt" style="left:370px;top:481.7px;font-size:13px">.local</div>
<svg style="left:346px;top:509.2px" width="14" height="11" viewBox="0 0 14 11"><path d="M0.6 10.4 V0.6 H5 L6.4 2.2 H13.4 V10.4 Z" fill="none" stroke="#e6e4e0" stroke-width="1.25" stroke-linejoin="round"/></svg>
<div class="t pt" style="left:370px;top:505.7px;font-size:13px">.ssh</div>
<svg style="left:346px;top:533.2px" width="14" height="11" viewBox="0 0 14 11"><path d="M0.6 10.4 V0.6 H5 L6.4 2.2 H13.4 V10.4 Z" fill="none" stroke="#e6e4e0" stroke-width="1.25" stroke-linejoin="round"/></svg>
<div class="t pt" style="left:370px;top:529.7px;font-size:13px">.tmp</div>
<svg style="left:326px;top:557.3px" width="14" height="11" viewBox="0 0 14 11"><path d="M0.6 10.4 V0.6 H5 L6.4 2.2 H13.4 V10.4 Z" fill="none" stroke="#e6e4e0" stroke-width="1.25" stroke-linejoin="round"/></svg>
<div class="t pt" style="left:350px;top:553.8px;font-size:13px">srv</div>
<div class="a" style="left:307px;top:584.4px;width:0;height:0;border-top:4px solid transparent;border-bottom:4px solid transparent;border-left:5px solid #e6e4e0"></div>
<svg style="left:326px;top:581.4px" width="14" height="11" viewBox="0 0 14 11"><path d="M0.6 10.4 V0.6 H5 L6.4 2.2 H13.4 V10.4 Z" fill="none" stroke="#e6e4e0" stroke-width="1.25" stroke-linejoin="round"/></svg>
<div class="t pt" style="left:350px;top:577.9px;font-size:13px">usr</div>
<div class="a" style="left:307px;top:608.4px;width:0;height:0;border-top:4px solid transparent;border-bottom:4px solid transparent;border-left:5px solid #e6e4e0"></div>
<svg style="left:326px;top:605.4px" width="14" height="11" viewBox="0 0 14 11"><path d="M0.6 10.4 V0.6 H5 L6.4 2.2 H13.4 V10.4 Z" fill="none" stroke="#e6e4e0" stroke-width="1.25" stroke-linejoin="round"/></svg>
<div class="t pt" style="left:350px;top:601.9px;font-size:13px">var</div>
<div class="a" style="left:294px;top:742px;width:260px;height:1px;background:#3a3c3f"></div>
<svg style="left:299px;top:746.5px" width="12" height="12" viewBox="0 0 12 12"><circle cx="6" cy="6" r="6" fill="#d4d0c8"/><path d="M3.8 3.8 L8.2 8.2 M8.2 3.8 L3.8 8.2" stroke="#1b1c1e" stroke-width="1.6"/></svg>
<div class="a" style="left:315px;top:745px;width:2px;height:16px;background:#74726d"></div>
<div class="t" style="left:321px;top:743px;font-size:13px;color:#6b6c6e">Filter</div>
<div class="a" style="left:527px;top:745px;width:2px;height:16px;background:#74726d"></div>
<svg style="left:533px;top:747px" width="13" height="11" viewBox="0 0 13 11"><path d="M0 10.5 V0.5 H4.6 L5.8 2 H12.6 V10.5 Z" fill="#d4d0c8"/></svg>
<div class="t pt" style="left:294px;top:777.7px;font-size:13px">Showing 1 to 10 of 10 items</div>


<!-- TABLE -->
<div class="a" style="left:559px;top:164px;width:963px;height:287px;border:1px solid #3e4144;background:#1a1b1d"></div>
<div class="a" style="left:560px;top:197px;width:961px;height:1px;background:#3a3d40"></div>
<div class="a" style="left:560px;top:220px;width:961px;height:230px;background:#35383a"></div>
<div class="a" style="left:560px;top:428px;width:961px;height:22px;background:#2d2b0b"></div>

<div class="t pt" style="left:642px;top:169.7px;font-size:13.6px">Name</div>
<svg style="left:685px;top:174px" width="8" height="13" viewBox="0 0 8 13"><path d="M4 0 L7.6 5 H0.4 Z M0.4 7.6 H7.6 L4 12.6 Z" fill="#414244"/></svg>
<div class="t pt" style="left:1175px;top:169.7px;font-size:13.6px">Size</div>
<svg style="left:1206px;top:174px" width="8" height="13" viewBox="0 0 8 13"><path d="M4 0 L7.6 5 H0.4 Z M0.4 7.6 H7.6 L4 12.6 Z" fill="#414244"/></svg>
<div class="t pt" style="left:1250px;top:169.7px;font-size:13.6px">Owner</div>
<svg style="left:1295px;top:174px" width="8" height="13" viewBox="0 0 8 13"><path d="M4 0 L7.6 5 H0.4 Z M0.4 7.6 H7.6 L4 12.6 Z" fill="#414244"/></svg>
<div class="t pt" style="left:1317px;top:169.7px;font-size:13.6px">Mode</div>
<svg style="left:1359px;top:174px" width="8" height="13" viewBox="0 0 8 13"><path d="M4 0 L7.6 5 H0.4 Z M0.4 7.6 H7.6 L4 12.6 Z" fill="#414244"/></svg>
<div class="t pt" style="left:1380px;top:169.7px;font-size:13.6px">Modified</div>
<svg style="left:1439px;top:174px" width="8" height="13" viewBox="0 0 8 13"><path d="M4 0 L7.6 5 H0.4 Z M0.4 7.6 H7.6 L4 12.6 Z" fill="#414244"/></svg>
<svg style="left:564px;top:202px" width="15" height="12" viewBox="0 0 15 12"><path d="M0.7 11.3 V0.7 H5.4 L6.8 2.4 H14.3 V11.3 Z" fill="none" stroke="#d4d0c8" stroke-width="1.3" stroke-linejoin="round"/></svg>
<div class="t pt" style="left:583px;top:200px;font-size:13px">..</div>
<svg style="left:604px;top:223px" width="16" height="16" viewBox="0 0 16 16"><defs><linearGradient id="fg" x1="0" y1="0" x2="0" y2="1"><stop offset="0" stop-color="#f0cc9e"/><stop offset="1" stop-color="#c98d56"/></linearGradient></defs><path d="M0 2.2 Q0 0.6 1.4 0.6 H5 Q5.8 0.6 6.2 1.4 H14.6 Q16 1.4 16 2.8 V14.4 Q16 15.8 14.6 15.8 H1.4 Q0 15.8 0 14.4 Z" fill="url(#fg)"/></svg>
<div class="a" style="left:564px;top:224px;width:15px;height:15px;border-radius:2px;border:1.5px solid #5a5b5b"></div>
<div class="t pt" style="left:642px;top:220.5px;font-size:13px">.config</div>
<div class="t pt" style="left:1250px;top:220.5px;font-size:13px">root:root</div>
<div class="t pt" style="left:1317px;top:220.5px;font-size:13px">0700</div>
<div class="t pt" style="left:1380px;top:220.5px;font-size:13px">2024/09/06 - 22:35:30</div>
<div class="a" style="left:560px;top:243px;width:961px;height:1px;background:#3a3d40"></div>
<svg style="left:604px;top:246px" width="16" height="16" viewBox="0 0 16 16"><defs><linearGradient id="fg" x1="0" y1="0" x2="0" y2="1"><stop offset="0" stop-color="#f0cc9e"/><stop offset="1" stop-color="#c98d56"/></linearGradient></defs><path d="M0 2.2 Q0 0.6 1.4 0.6 H5 Q5.8 0.6 6.2 1.4 H14.6 Q16 1.4 16 2.8 V14.4 Q16 15.8 14.6 15.8 H1.4 Q0 15.8 0 14.4 Z" fill="url(#fg)"/></svg>
<div class="a" style="left:564px;top:247px;width:15px;height:15px;border-radius:2px;border:1.5px solid #5a5b5b"></div>
<div class="t pt" style="left:642px;top:243.5px;font-size:13px">.filemin</div>
<div class="t pt" style="left:1250px;top:243.5px;font-size:13px">root:root</div>
<div class="t pt" style="left:1317px;top:243.5px;font-size:13px">0755</div>
<div class="t pt" style="left:1380px;top:243.5px;font-size:13px">2025/01/03 - 15:13:36</div>
<div class="a" style="left:560px;top:266px;width:961px;height:1px;background:#3a3d40"></div>
<svg style="left:604px;top:269px" width="16" height="16" viewBox="0 0 16 16"><defs><linearGradient id="fg" x1="0" y1="0" x2="0" y2="1"><stop offset="0" stop-color="#f0cc9e"/><stop offset="1" stop-color="#c98d56"/></linearGradient></defs><path d="M0 2.2 Q0 0.6 1.4 0.6 H5 Q5.8 0.6 6.2 1.4 H14.6 Q16 1.4 16 2.8 V14.4 Q16 15.8 14.6 15.8 H1.4 Q0 15.8 0 14.4 Z" fill="url(#fg)"/></svg>
<div class="a" style="left:564px;top:270px;width:15px;height:15px;border-radius:2px;border:1.5px solid #5a5b5b"></div>
<div class="t pt" style="left:642px;top:266.5px;font-size:13px">.gnupg</div>
<div class="t pt" style="left:1250px;top:266.5px;font-size:13px">root:root</div>
<div class="t pt" style="left:1317px;top:266.5px;font-size:13px">0700</div>
<div class="t pt" style="left:1380px;top:266.5px;font-size:13px">2024/09/06 - 20:18:54</div>
<div class="a" style="left:560px;top:289px;width:961px;height:1px;background:#3a3d40"></div>
<svg style="left:604px;top:292px" width="16" height="16" viewBox="0 0 16 16"><defs><linearGradient id="fg" x1="0" y1="0" x2="0" y2="1"><stop offset="0" stop-color="#f0cc9e"/><stop offset="1" stop-color="#c98d56"/></linearGradient></defs><path d="M0 2.2 Q0 0.6 1.4 0.6 H5 Q5.8 0.6 6.2 1.4 H14.6 Q16 1.4 16 2.8 V14.4 Q16 15.8 14.6 15.8 H1.4 Q0 15.8 0 14.4 Z" fill="url(#fg)"/></svg>
<div class="a" style="left:564px;top:293px;width:15px;height:15px;border-radius:2px;border:1.5px solid #5a5b5b"></div>
<div class="t pt" style="left:642px;top:289.5px;font-size:13px">.local</div>
<div class="t pt" style="left:1250px;top:289.5px;font-size:13px">root:root</div>
<div class="t pt" style="left:1317px;top:289.5px;font-size:13px">0755</div>
<div class="t pt" style="left:1380px;top:289.5px;font-size:13px">2024/09/06 - 21:28:20</div>
<div class="a" style="left:560px;top:312px;width:961px;height:1px;background:#3a3d40"></div>
<svg style="left:604px;top:315px" width="16" height="16" viewBox="0 0 16 16"><defs><linearGradient id="fg" x1="0" y1="0" x2="0" y2="1"><stop offset="0" stop-color="#f0cc9e"/><stop offset="1" stop-color="#c98d56"/></linearGradient></defs><path d="M0 2.2 Q0 0.6 1.4 0.6 H5 Q5.8 0.6 6.2 1.4 H14.6 Q16 1.4 16 2.8 V14.4 Q16 15.8 14.6 15.8 H1.4 Q0 15.8 0 14.4 Z" fill="url(#fg)"/></svg>
<div class="a" style="left:564px;top:316px;width:15px;height:15px;border-radius:2px;border:1.5px solid #5a5b5b"></div>
<div class="t pt" style="left:642px;top:312.5px;font-size:13px">.ssh</div>
<div class="t pt" style="left:1250px;top:312.5px;font-size:13px">root:root</div>
<div class="t pt" style="left:1317px;top:312.5px;font-size:13px">0700</div>
<div class="t pt" style="left:1380px;top:312.5px;font-size:13px">2024/09/06 - 21:32:48</div>
<div class="a" style="left:560px;top:335px;width:961px;height:1px;background:#3a3d40"></div>
<svg style="left:604px;top:338px" width="16" height="16" viewBox="0 0 16 16"><defs><linearGradient id="fg" x1="0" y1="0" x2="0" y2="1"><stop offset="0" stop-color="#f0cc9e"/><stop offset="1" stop-color="#c98d56"/></linearGradient></defs><path d="M0 2.2 Q0 0.6 1.4 0.6 H5 Q5.8 0.6 6.2 1.4 H14.6 Q16 1.4 16 2.8 V14.4 Q16 15.8 14.6 15.8 H1.4 Q0 15.8 0 14.4 Z" fill="url(#fg)"/></svg>
<div class="a" style="left:564px;top:339px;width:15px;height:15px;border-radius:2px;border:1.5px solid #5a5b5b"></div>
<div class="t pt" style="left:642px;top:335.5px;font-size:13px">.tmp</div>
<div class="t pt" style="left:1250px;top:335.5px;font-size:13px">root:root</div>
<div class="t pt" style="left:1317px;top:335.5px;font-size:13px">0755</div>
<div class="t pt" style="left:1380px;top:335.5px;font-size:13px">2025/01/03 - 15:13:58</div>
<div class="a" style="left:560px;top:358px;width:961px;height:1px;background:#3a3d40"></div>
<svg style="left:605px;top:362px" width="14" height="14" viewBox="0 0 14 14"><defs><linearGradient id="lg" x1="0" y1="0" x2="0" y2="1"><stop offset="0" stop-color="#bdbdbd"/><stop offset="1" stop-color="#8f8f8f"/></linearGradient></defs><rect x="0" y="0" width="14" height="14" rx="2.2" fill="url(#lg)"/><path d="M4.6 2.8 H11.2 V9.4 L9.2 7.4 L5.6 11.2 Q4.4 9 2.8 8.4 L6.6 4.8 Z" fill="#2e2e2e"/></svg>
<div class="a" style="left:564px;top:362px;width:15px;height:15px;border-radius:2px;border:1.5px solid #5a5b5b"></div>
<div class="t pt" style="left:642px;top:358.5px;font-size:13px">.bash_history</div>
<div class="t pt" style="left:1250px;top:358.5px;font-size:13px">root:root</div>
<div class="t pt" style="left:1317px;top:358.5px;font-size:13px">0777</div>
<div class="t pt" style="left:1380px;top:358.5px;font-size:13px">2023/11/15 - 10:44:24</div>
<div class="a" style="left:560px;top:381px;width:961px;height:1px;background:#3a3d40"></div>
<svg style="left:604px;top:384px" width="16" height="16" viewBox="0 0 16 16"><rect x="0" y="0" width="16" height="16" rx="1.6" fill="#f0f0f0"/><text x="1.8" y="6.6" font-family="Liberation Sans" font-size="6.6" fill="#8c8c8c" textLength="12.4">ABC</text><path d="M2 8.6 H14 M2 10.4 H14 M2 12.6 H9" stroke="#a8a8a8" stroke-width="0.7" stroke-dasharray="1.6 0.5"/></svg>
<div class="a" style="left:564px;top:385px;width:15px;height:15px;border-radius:2px;border:1.5px solid #5a5b5b"></div>
<div class="t pt" style="left:642px;top:381.5px;font-size:13px">.bashrc</div>
<div class="t pt" style="left:1175px;top:381.5px;font-size:13px">3.44 KiB</div>
<div class="t pt" style="left:1250px;top:381.5px;font-size:13px">root:root</div>
<div class="t pt" style="left:1317px;top:381.5px;font-size:13px">0644</div>
<div class="t pt" style="left:1380px;top:381.5px;font-size:13px">2023/11/15 - 10:44:47</div>
<div class="a" style="left:560px;top:404px;width:961px;height:1px;background:#3a3d40"></div>
<svg style="left:604px;top:407px" width="16" height="16" viewBox="0 0 16 16"><rect x="0" y="0" width="16" height="16" rx="1.6" fill="#f0f0f0"/><text x="1.8" y="6.6" font-family="Liberation Sans" font-size="6.6" fill="#8c8c8c" textLength="12.4">ABC</text><path d="M2 8.6 H14 M2 10.4 H14 M2 12.6 H9" stroke="#a8a8a8" stroke-width="0.7" stroke-dasharray="1.6 0.5"/></svg>
<div class="a" style="left:564px;top:408px;width:15px;height:15px;border-radius:2px;border:1.5px solid #5a5b5b"></div>
<div class="t pt" style="left:642px;top:404.5px;font-size:13px">.profile</div>
<div class="t pt" style="left:1175px;top:404.5px;font-size:13px">161 bytes</div>
<div class="t pt" style="left:1250px;top:404.5px;font-size:13px">root:root</div>
<div class="t pt" style="left:1317px;top:404.5px;font-size:13px">0644</div>
<div class="t pt" style="left:1380px;top:404.5px;font-size:13px">2019/07/09 - 12:05:50</div>
<div class="a" style="left:560px;top:427px;width:961px;height:1px;background:#3a3d40"></div>
<svg style="left:604px;top:430px" width="16" height="16" viewBox="0 0 16 16"><rect x="0" y="0" width="16" height="16" rx="1.6" fill="#f0f0f0"/><text x="1.8" y="6.6" font-family="Liberation Sans" font-size="6.6" fill="#8c8c8c" textLength="12.4">ABC</text><path d="M2 8.6 H14 M2 10.4 H14 M2 12.6 H9" stroke="#a8a8a8" stroke-width="0.7" stroke-dasharray="1.6 0.5"/></svg>
<div class="a" style="left:564px;top:431px;width:14px;height:14px;border-radius:2px;background:#619be9"></div>
<svg style="left:566px;top:434px" width="10" height="9" viewBox="0 0 10 9"><path d="M1 4.6 L3.8 7.4 L9 1.6" stroke="#f4f4f4" stroke-width="2" fill="none"/></svg>
<div class="t pt" style="left:642px;top:427.5px;font-size:13px">root.txt</div>
<div class="t pt" style="left:1175px;top:427.5px;font-size:13px">33 bytes</div>
<div class="t pt" style="left:1250px;top:427.5px;font-size:13px">root:root</div>
<div class="t pt" style="left:1317px;top:427.5px;font-size:13px">0400</div>
<div class="t pt" style="left:1380px;top:427.5px;font-size:13px">2024/09/06 - 21:28:25</div>

<!-- EDITOR -->
<div class="a" style="left:560px;top:482px;width:953px;height:244px;background:#1f2022;box-shadow:0 1px 5px 1px rgba(0,0,0,.35)"></div>
<div class="a" style="left:560px;top:482px;width:953px;height:29px;border:1px solid #3a3c3f"></div>
<div class="a" style="left:560px;top:511px;width:37px;height:187px;background:#0f1110"></div>
<div class="a" style="left:597px;top:511px;width:916px;height:187px;background:#000"></div>
<div class="a" style="left:597px;top:532px;width:896px;height:17px;background:#1a1b1d"></div>
<div class="a" style="left:560px;top:698px;width:953px;height:1px;background:#3a3c3f"></div>
<div class="a" style="left:560px;top:699px;width:953px;height:27px;background:#202123"></div>
<svg style="left:569px;top:489.5px" width="16" height="15" viewBox="0 0 16 15">
 <path d="M7.2 2.6 H2 Q1 2.6 1 3.6 V13 Q1 14 2 14 H11.4 Q12.4 14 12.4 13 V8" fill="none" stroke="#e4e2dc" stroke-width="1.6"/>
 <path d="M5.6 10.4 L6 7.6 L12.6 1 Q13.3 0.4 14 1 L14.8 1.8 Q15.4 2.5 14.8 3.2 L8.2 9.8 Z" fill="none" stroke="#e4e2dc" stroke-width="1.4" stroke-linejoin="round"/>
</svg>
<div class="t" style="left:590.5px;top:486.5px;font-size:13px;font-weight:bold;letter-spacing:-0.3px;color:#eceae6">root.txt (/root)</div>
<svg style="left:684.5px;top:489px" width="16" height="15" viewBox="0 0 16 15">
 <path d="M8 1 L9.9 5.3 L14.6 5.8 L11.1 8.9 L12.1 13.6 L8 11.2 L3.9 13.6 L4.9 8.9 L1.4 5.8 L6.1 5.3 Z" fill="none" stroke="#d4d0c8" stroke-width="1.3" stroke-linejoin="round"/>
</svg>
<div class="t" style="left:1251.5px;top:485px;font-size:11px;letter-spacing:-0.35px;color:#a19f99">Plain Text</div>
<div class="t" style="left:1320px;top:485px;font-size:11px;letter-spacing:-0.5px;color:#a19f99">UTF-8</div>
<svg style="left:1379.5px;top:488.5px" width="14" height="14" viewBox="0 0 14 14">
 <path fill="#e4e2dc" d="M0 1.2 Q0 0 1.2 0 H10.4 L14 3.6 V12.8 Q14 14 12.8 14 H1.2 Q0 14 0 12.8 Z"/>
 <rect x="2" y="2" width="8" height="2.2" fill="#1f2022"/>
 <circle cx="7" cy="9.4" r="1.9" fill="#1f2022"/>
</svg>
<svg style="left:1411.5px;top:491px" width="15" height="10" viewBox="0 0 15 10">
 <g fill="#e4e2dc"><rect x="0" y="0" width="15" height="2"/><rect x="0" y="3.7" width="15" height="2"/><rect x="0" y="7.4" width="15" height="2"/></g>
</svg>
<div class="a" style="left:1444px;top:498px;width:13px;height:3px;background:#e4e2dc"></div>
<div class="a" style="left:1468px;top:490px;width:13px;height:12px;border:2px solid #e4e2dc;border-top-width:2.5px"></div>
<svg style="left:1490px;top:489px" width="13.5" height="12.5" viewBox="0 0 13.5 12.5">
 <path d="M1.5 1.5 L12 11 M12 1.5 L1.5 11" stroke="#e4e2dc" stroke-width="3"/>
</svg>
<div class="t" style="left:578.3px;top:514.5px;font-family:'Liberation Mono',monospace;font-size:12px;color:#cfcdc8;-webkit-text-stroke:0.2px #cfcdc8">1</div>
<div class="t" style="left:578.3px;top:531.5px;font-family:'Liberation Mono',monospace;font-size:12px;color:#cfcdc8;-webkit-text-stroke:0.2px #cfcdc8">2</div>
<div class="t" style="left:600.5px;top:514.5px;font-family:'Liberation Mono',monospace;font-size:12px;color:#e6e4e0;-webkit-text-stroke:0.3px #e6e4e0">8968662c86171f7a5afe387a949fe665</div>
<div class="t" style="left:1429.5px;top:702px;font-size:12px;font-weight:bold;letter-spacing:-0.4px;color:#a8a6a0">33 bytes</div>
<svg style="left:1486.5px;top:704.5px" width="14" height="14" viewBox="0 0 14 14">
 <circle cx="7" cy="7" r="7" fill="#7f7e7b"/><circle cx="7" cy="3.7" r="1.1" fill="#232426"/><rect x="6" y="5.6" width="2" height="5.2" fill="#232426"/>
</svg>
<!-- translate widget -->
<div class="a" style="left:1518px;top:487px;width:36px;height:36px;overflow:hidden">
 <div class="a" style="left:0;top:0;width:40px;height:36px;border-radius:18px 0 0 18px;background:rgba(120,30,60,0.45)"></div>
 <svg style="left:11px;top:9px" width="20" height="18" viewBox="0 0 20 18">
  <g fill="none" stroke="#bcb5b8" stroke-width="1.5"><rect x="1" y="2.5" width="7" height="5"/><path d="M4.5 0 V11"/><path d="M13 2.5 Q17 2 17 6"/><path d="M3 11 Q3 16 8 16"/><path d="M10 17 L13.5 7 L17 17 M11.2 13.5 H15.8"/></g>
 </svg>
</div>
</body></html>
